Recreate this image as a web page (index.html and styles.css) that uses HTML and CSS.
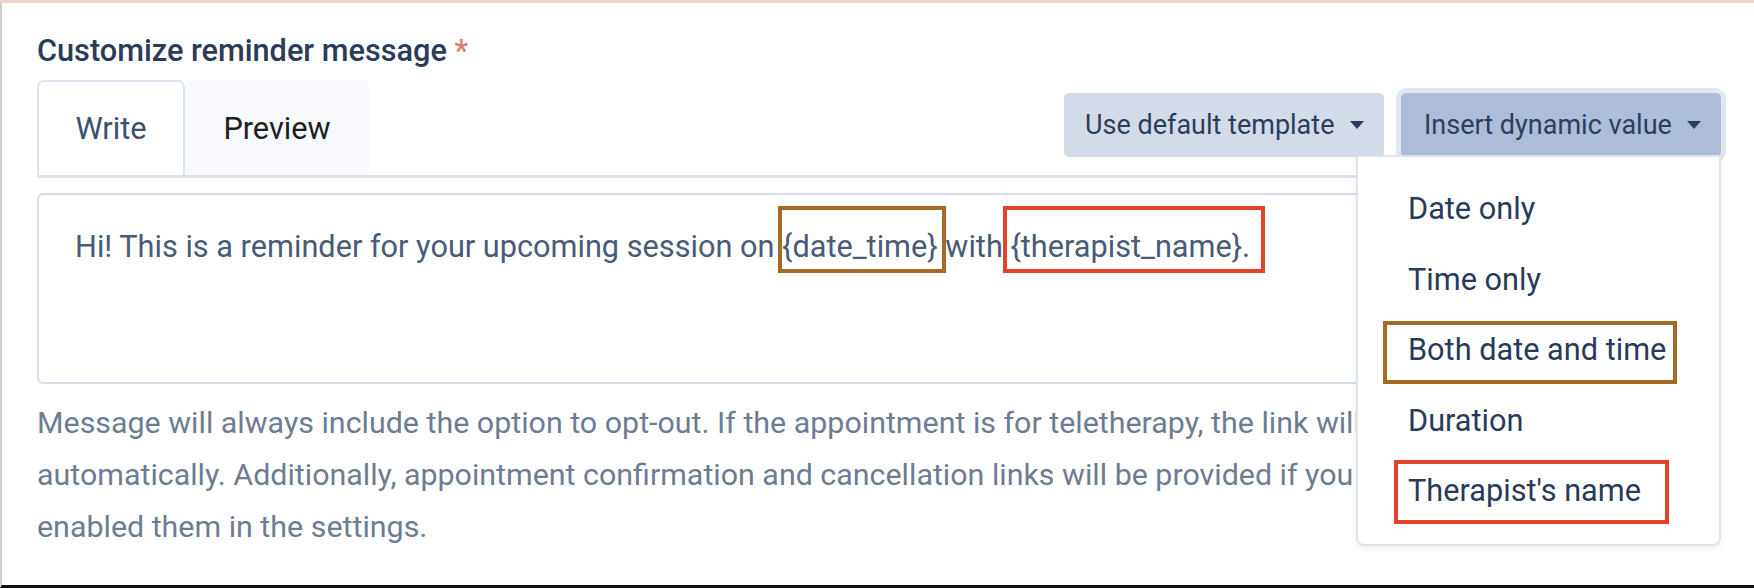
FILE: index.html
```html
<!DOCTYPE html>
<html lang="en">
<head>
<meta charset="utf-8">
<title>Customize reminder message</title>
<link rel="stylesheet" href="styles.css">
</head>
<body>
<div class="frame">
  <div class="panel">
    <div class="label">Customize reminder message <span class="req">*</span></div>
    <div class="toolbar">
      <div class="tabs">
        <button class="tab tab-active">Write</button>
        <button class="tab">Preview</button>
      </div>
      <div class="actions">
        <button class="btn btn-default">Use default template <span class="caret"></span></button>
        <div class="dropdown">
          <button class="btn btn-insert">Insert dynamic value <span class="caret"></span></button>
          <ul class="menu">
            <li class="menu-item">Date only</li>
            <li class="menu-item">Time only</li>
            <li class="menu-item">Both date and time<span class="anno anno-brown anno-both"></span></li>
            <li class="menu-item">Duration</li>
            <li class="menu-item">Therapist's name<span class="anno anno-red anno-ther"></span></li>
          </ul>
        </div>
      </div>
    </div>
    <div class="editor">Hi! This is a reminder for your upcoming session on <span class="hl hl-brown">{date_time}</span> with <span class="hl hl-red">{therapist_name}.</span></div>
    <p class="help">Message will always include the option to opt-out. If the appointment is for teletherapy, the link will be included automatically. Additionally, appointment confirmation and cancellation links will be provided if you have enabled them in the settings.</p>
  </div>
</div>
</body>
</html>
```
FILE: styles.css
```css
* { box-sizing: border-box; }
html, body { margin: 0; padding: 0; background: #fff; }
body { font-family: Roboto, "Liberation Sans", Arial, sans-serif; }

.frame {
  width: 1754px;
  height: 588px;
  border-top: 3px solid #e9d6d0;
  border-left: 2px solid #d3d0cb;
  border-bottom: 3px solid #111;
  overflow: hidden;
}

.panel {
  padding: 30px 33px 0 35px;
  width: 1752px;
}

.label {
  font-size: 30.7px;
  font-weight: 500;
  line-height: 36px;
  color: #2c3b58;
}
.req { color: #e07a6c; }

.toolbar {
  margin-top: 11px;
  display: flex;
  justify-content: space-between;
  border-bottom: 3px solid #dbe2ed;
}

.tabs { display: flex; }
.tab {
  font-family: inherit;
  font-size: 30.7px;
  height: 95px;
  border: 2px solid transparent;
  border-bottom: 0;
  border-radius: 7px 7px 0 0;
  background: #f7f9fd;
  color: #1e1e1e;
  padding: 0;
  width: 184px;
}
.tab-active {
  width: 148px;
  background: #fff;
  border-color: #dce4f0;
  color: #3d5071;
}

.actions {
  display: flex;
  gap: 17px;
  margin-top: 13px;
  align-self: flex-start;
}

.btn {
  font-family: inherit;
  font-size: 27px;
  height: 64px;
  width: 320px;
  border: 0;
  border-radius: 5px;
  color: #2d3d5c;
  display: flex;
  align-items: center;
  justify-content: space-between;
  padding: 0 20px 0 21px;
}
.btn-default { background: #d3dbe8; }
.btn-insert {
  background: #adbcd7;
  box-shadow: 0 0 0 5px #e1e6ef;
  padding-left: 23px;
}
.caret {
  width: 0; height: 0;
  border-left: 7px solid transparent;
  border-right: 7px solid transparent;
  border-top: 8px solid #2d3d5c;
}

.dropdown { position: relative; }
.menu {
  position: absolute;
  top: 62px;
  right: 0;
  width: 365px;
  margin: 0;
  padding: 17px 0 17px 0;
  list-style: none;
  background: #fff;
  border: 2px solid #e0e4ec;
  border-radius: 0 0 8px 8px;
  box-shadow: 0 3px 6px rgba(40, 55, 90, 0.08);
  z-index: 5;
}
.menu-item {
  position: relative;
  height: 70.5px;
  line-height: 70.5px;
  padding-left: 50px;
  font-size: 30.7px;
  color: #2a3a5a;
  white-space: nowrap;
}

.anno {
  position: absolute;
  border: 4px solid;
  pointer-events: none;
}
.anno-brown { border-color: #a36b24; }
.anno-red { border-color: #e6412a; }
.anno-both { left: 25px; top: 6px; width: 294px; height: 63px; }
.anno-ther { left: 36px; top: 4px; width: 275px; height: 64px; }

.editor {
  margin-top: 15px;
  height: 191px;
  border: 2px solid #d6deea;
  border-radius: 6px;
  padding: 30px 36px;
  font-size: 30.7px;
  line-height: 44px;
  color: #4a5a77;
}
.hl { position: relative; }
.hl::after {
  content: "";
  position: absolute;
  top: -23px;
  bottom: -9px;
  left: -4px;
  right: -4px;
  border: 4px solid;
}
.hl-brown::after { border-color: #a36b24; right: -8px; }
.hl-red::after { border-color: #e6412a; left: -7px; right: -15px; }

.help {
  margin: 13px 0 0 0;
  max-width: 1490px;
  font-size: 30.4px;
  line-height: 52px;
  color: #6e7c92;
}
```
